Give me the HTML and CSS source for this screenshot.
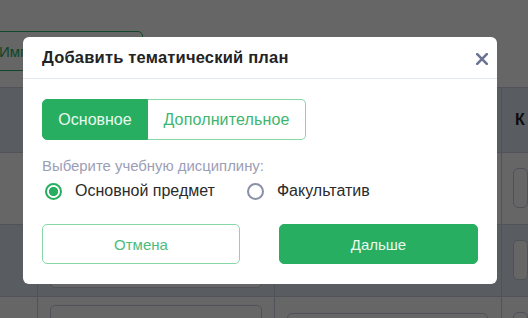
FILE: index.html
```html
<!DOCTYPE html>
<html lang="ru">
<head>
<meta charset="utf-8">
<title>Добавить тематический план</title>
<link rel="stylesheet" href="styles.css">
</head>
<body>
<div class="page">
  <div class="toolbar">
    <button class="import">Импорт тем</button>
  </div>
  <div class="table">
    <div class="row head">
      <div class="c"></div>
      <div class="c"></div>
      <div class="c"></div>
      <div class="c c4"><span class="th">К</span></div>
    </div>
    <div class="row">
      <div class="c"></div>
      <div class="c pad2"><div class="box tall"></div></div>
      <div class="c pad3"><div class="box"></div></div>
      <div class="c pad4"><div class="box"></div></div>
    </div>
    <div class="row alt">
      <div class="c"></div>
      <div class="c pad2"><div class="box tall"></div></div>
      <div class="c pad3"><div class="box"></div></div>
      <div class="c pad4"><div class="box"></div></div>
    </div>
    <div class="row">
      <div class="c"></div>
      <div class="c pad2"><div class="box tall">Алгебра. Б.К. Колмогоров</div></div>
      <div class="c pad3 low"><div class="box"></div></div>
      <div class="c pad4"><div class="box"></div></div>
    </div>
  </div>
</div>

<div class="overlay">
  <div class="modal">
    <div class="modal-head">
      <h2 class="modal-title">Добавить тематический план</h2>
      <button class="close" aria-label="Закрыть">
        <svg width="12" height="12" viewBox="0 0 12 12"><path d="M1.2 1.2 L10.8 10.8 M10.8 1.2 L1.2 10.8" stroke="#6b7592" stroke-width="2.6" stroke-linecap="round"/></svg>
      </button>
    </div>
    <div class="modal-body">
      <div class="seg">
        <button class="seg-btn active">Основное</button>
        <button class="seg-btn">Дополнительное</button>
      </div>
      <div class="label">Выберите учебную дисциплину:</div>
      <div class="radios">
        <label class="radio"><span class="dot on"></span>Основной предмет</label>
        <label class="radio"><span class="dot"></span>Факультатив</label>
      </div>
      <div class="actions">
        <button class="btn cancel">Отмена</button>
        <button class="btn next">Дальше</button>
      </div>
    </div>
  </div>
</div>
</body>
</html>
```

FILE: styles.css
```css
* { box-sizing: border-box; }
html, body { margin: 0; padding: 0; }
body {
  width: 528px;
  height: 318px;
  overflow: hidden;
  background: #ffffff;
  font-family: "Liberation Sans", Arial, sans-serif;
  position: relative;
}

.toolbar {
  height: 87px;
  padding-top: 31px;
}
.import {
  margin-left: -14px;
  width: 157px;
  height: 40px;
  border: 1px solid #2fb366;
  border-radius: 5px;
  background: #ffffff;
  color: #27ae60;
  font-family: inherit;
  font-size: 15px;
  text-align: left;
  padding-left: 12px;
}

.table { border-top: 1px solid #c9d1db; }
.row {
  display: grid;
  grid-template-columns: 38px 237px 227px 1fr;
  height: 72px;
  border-bottom: 1px solid #c9d1db;
  background: #ffffff;
}
.row.head { height: 65px; background: #dfe7f0; }
.row.alt { background: #dfe7f0; }
.c { border-right: 1px solid #c9d1db; }
.c4 { border-right: none; display: flex; align-items: center; padding-left: 13px; }
.th { font-weight: bold; font-size: 16px; color: #222; }
.pad2 { padding: 8px 12px 0 12px; }
.pad3 { padding: 15px 13px 0 12px; }
.pad3.low { padding-top: 16px; }
.pad4 { padding: 15px 0 0 11px; border-right: none; }
.box {
  height: 40px;
  border: 1px solid #c5ccd6;
  border-radius: 5px;
  background: #ffffff;
}
.box.tall {
  height: 55px;
  padding: 10px 12px;
  font-size: 15px;
  color: #222;
}

.overlay {
  position: absolute;
  inset: 0;
  background: rgba(0, 0, 0, 0.6);
  padding: 37px 0 0 23px;
}
.modal {
  width: 474px;
  background: #ffffff;
  border-radius: 6px;
}
.modal-head {
  height: 42px;
  border-bottom: 1px solid #e3e8ef;
  display: flex;
  align-items: center;
  justify-content: space-between;
  padding: 0 9px 0 19px;
}
.modal-title {
  margin: 0;
  font-size: 16.5px;
  font-weight: bold;
  color: #232323;
  letter-spacing: 0.2px;
}
.close {
  border: none;
  background: none;
  padding: 0;
  width: 12px;
  height: 12px;
  display: block;
  margin-top: 2px;
}
.close svg { display: block; }

.modal-body { padding: 20px 19px 20px 19px; }

.seg { display: flex; height: 41px; }
.seg-btn {
  font-family: inherit;
  font-size: 16px;
  height: 41px;
  padding: 0;
  background: #ffffff;
  color: #3db56e;
  border: 1px solid #86d6a6;
  border-left: none;
  border-radius: 0 5px 5px 0;
  width: 158px;
  letter-spacing: 0.15px;
}
.seg-btn.active {
  width: 106px;
  background: #27ae60;
  color: #e9f8ef;
  border: 1px solid #27ae60;
  border-radius: 5px 0 0 5px;
  letter-spacing: 0;
}

.label {
  margin-top: 18px;
  font-size: 14.9px;
  color: #9c9eb6;
  line-height: 16px;
}
.radios {
  display: flex;
  margin-top: 7px;
  height: 20px;
  align-items: center;
  gap: 32px;
}
.radio {
  display: flex;
  align-items: center;
  gap: 13px;
  font-size: 16px;
  color: #2b2b2b;
  padding-left: 3px;
}
.radio + .radio { padding-left: 0; }
.dot {
  width: 17px;
  height: 17px;
  border-radius: 50%;
  border: 2px solid #8a8fa8;
  background: #ffffff;
  display: inline-block;
}
.dot.on {
  border-color: #27ae60;
  background: radial-gradient(circle, #27ae60 0 4.3px, #ffffff 4.8px);
}

.actions {
  display: grid;
  grid-template-columns: 198px 199px;
  column-gap: 39px;
  margin-top: 23px;
}
.btn {
  height: 40px;
  border-radius: 5px;
  font-family: inherit;
  font-size: 15px;
}
.cancel {
  background: #ffffff;
  border: 1.5px solid #86d6a6;
  color: #4fbb7b;
}
.next {
  background: #27ae60;
  border: 1px solid #27ae60;
  color: #eaf8f0;
}
```
